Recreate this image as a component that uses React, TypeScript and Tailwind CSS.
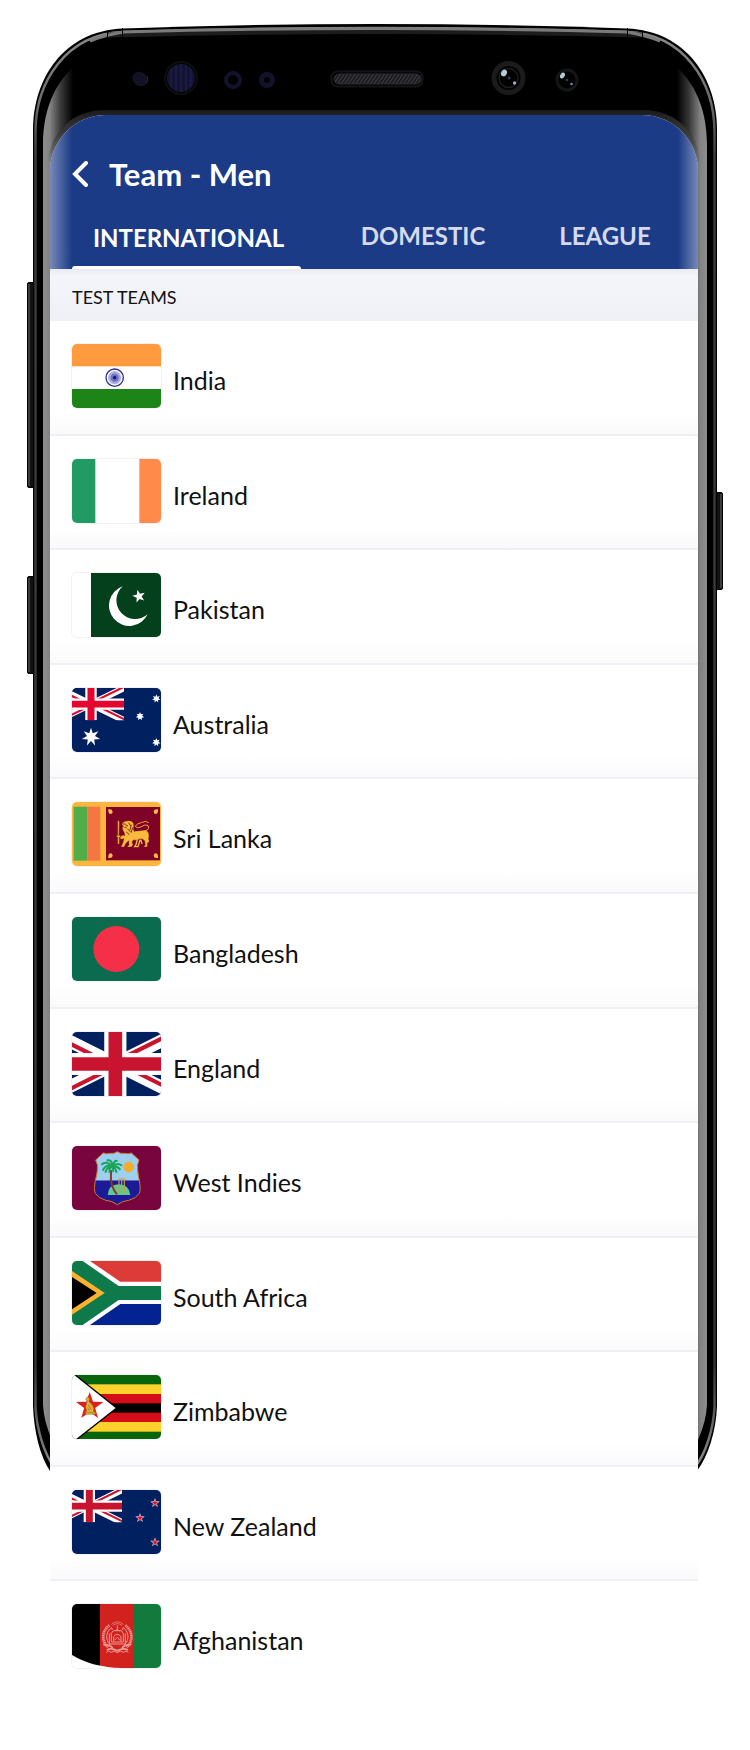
import type { ReactNode } from "react";

const NAVY = "#00205f";

function starPoints(cx: number, cy: number, r: number, n = 5, inner = 0.4) {
  const pts: string[] = [];
  for (let i = 0; i < n * 2; i++) {
    const radius = i % 2 === 0 ? r : r * inner;
    const a = (Math.PI * i) / n - Math.PI / 2;
    pts.push(`${(cx + radius * Math.cos(a)).toFixed(1)},${(cy + radius * Math.sin(a)).toFixed(1)}`);
  }
  return pts.join(" ");
}

function UnionJack({ x, width, height, red }: { x: number; width: number; height: number; red: string }) {
  return (
    <svg x={x} y={0} width={width} height={height} viewBox="0 0 60 30" preserveAspectRatio="none">
      <rect width="60" height="30" fill={NAVY} />
      <path d="M0 0L60 30M60 0L0 30" stroke="#fff" strokeWidth="6" />
      <path d="M0 0L30 15H25.6L0 2.2zM60 0L30 15H25.6L55.6 0zM60 30L30 15H34.4L60 27.8zM0 30L30 15H34.4L4.4 30z" fill={red} />
      <path d="M30 0V30M0 15H60" stroke="#fff" strokeWidth="10.4" />
      <path d="M30 0V30M0 15H60" stroke={red} strokeWidth="6.4" />
    </svg>
  );
}

function India() {
  return (
    <>
      <rect width="267" height="192" fill="#fff" />
      <rect width="267" height="67" fill="#ff9a3f" />
      <rect y="135" width="267" height="57" fill="#1d8517" />
      <circle cx="128" cy="101" r="26" fill="none" stroke="#2b2d96" strokeWidth="4" />
      <circle cx="128" cy="101" r="19" fill="#c3c4e6" />
      <circle cx="128" cy="101" r="12" fill="#8688cb" />
      {Array.from({ length: 12 }, (_, i) => (
        <path key={i} d="M128 80V122" stroke="#4244a6" strokeWidth="0.8" transform={`rotate(${i * 15} 128 101)`} />
      ))}
      <circle cx="128" cy="101" r="5" fill="#12148a" />
    </>
  );
}

function Ireland() {
  return (
    <>
      <rect width="267" height="192" fill="#fff" />
      <rect width="70" height="192" fill="#219b63" />
      <rect x="202" width="65" height="192" fill="#ff8a4a" />
    </>
  );
}

function Pakistan() {
  return (
    <>
      <rect width="267" height="192" fill="#fff" />
      <rect x="57" width="210" height="192" fill="#04401c" />
      <path d="M152 40A61 61 0 1 0 227 124A55 55 0 1 1 152 40z" fill="#fff" />
      <polygon points={starPoints(201, 70, 20)} fill="#fff" transform="rotate(-14 201 70)" />
    </>
  );
}

function Australia() {
  return (
    <>
      <rect width="267" height="192" fill={NAVY} />
      <UnionJack x={-42} width={198} height={97} red="#e4062f" />
      <polygon points={starPoints(57, 147, 28, 7, 0.44)} fill="#fff" />
      <polygon points={starPoints(204, 85, 13, 7, 0.5)} fill="#fff" />
      <polygon points={starPoints(253, 32, 13, 7, 0.5)} fill="#fff" />
      <polygon points={starPoints(253, 163, 13, 7, 0.5)} fill="#fff" />
    </>
  );
}

function SriLanka() {
  return (
    <>
      <rect width="267" height="192" fill="#fcb63f" />
      <rect x="5" y="14" width="41" height="162" fill="#50ad48" />
      <rect x="46" y="14" width="39" height="162" fill="#f47743" />
      <rect x="102" y="15" width="162" height="160" fill="#7e0326" />
      <g fill="#fcc04a">
        <path d="M109 22Q121 20 122 29Q122 36 115 36Q108 34 109 22z" />
        <path d="M258 22Q246 20 245 29Q245 36 252 36Q259 34 258 22z" />
        <path d="M109 168Q121 170 122 161Q122 154 115 154Q108 156 109 168z" />
        <path d="M258 168Q246 170 245 161Q245 154 252 154Q259 156 258 168z" />
      </g>
      <g fill="#fbb93e" stroke="#5b1a12" strokeWidth="1">
        <path d="M137 56Q142 54 142 62L141 100H137z" />
        <path d="M134 100H145V105H142V126H137V105H134z" />
        <path d="M144 106L152 99L158 101L157 92Q151 86 151 76L155 73L150 69Q150 60 160 58Q172 53 182 60Q188 68 184 80L186 88Q204 86 220 84Q231 88 231 102Q228 112 232 118L226 124V135H215L220 129L218 116Q212 110 206 110Q194 116 184 114L180 120L183 128L178 135H165L171 129L170 116L162 124L156 135H147L152 124L156 110L146 112z" />
      </g>
      <path d="M220 86Q234 82 228 70Q218 66 206 75Q194 80 190 72Q196 64 208 62Q222 54 230 62" fill="none" stroke="#efa93a" strokeWidth="3" />
      <path d="M160 68L168 72M170 62L176 72M178 68L174 84M166 80L178 92M157 76H164M163 90L172 98M182 76L178 90M153 66H160" fill="none" stroke="#6b1a16" strokeWidth="2.6" />
      <path d="M196 112L192 128L188 134H198L204 114M206 112L210 126" fill="none" stroke="#fbb93e" strokeWidth="4" />
    </>
  );
}

function Bangladesh() {
  return (
    <>
      <rect width="267" height="192" fill="#0b6b4f" />
      <circle cx="133" cy="96" r="69" fill="#f62f48" />
    </>
  );
}

function England() {
  return <UnionJack x={-62} width={384} height={192} red="#c8142f" />;
}

function WestIndies() {
  const shield =
    "M136 17Q145 24 157 22Q169 25 178 21L201 42Q194 58 197 72Q198 86 202 104Q207 132 202 142Q192 158 170 163Q152 164 136 176Q120 164 102 163Q80 158 70 142Q65 132 70 104Q75 86 76 72Q79 58 71 42L94 21Q103 25 115 22Q127 24 136 17z";
  return (
    <>
      <rect width="267" height="192" fill="#78053e" />
      <clipPath id="wi-shield">
        <path d={shield} />
      </clipPath>
      <g clipPath="url(#wi-shield)">
        <rect width="267" height="104" fill="#9dd0ee" />
        <rect y="104" width="267" height="88" fill="#1b1b98" />
      </g>
      <path d={shield} fill="none" stroke="#c97b2a" strokeWidth="3" />
      <circle cx="170" cy="63" r="16" fill="#f3ad2c" />
      <path d="M107 147Q109 115 140 115Q172 116 175 147z" fill="#5fca94" />
      <path d="M141 142V99H157V142M149 99V142" fill="none" stroke="#c6a23a" strokeWidth="3.5" />
      <path d="M118 72Q114 100 121 120Q126 136 135 145" fill="none" stroke="#8a3620" strokeWidth="6" />
      <g fill="none" stroke="#17a55c" strokeWidth="6">
        <path d="M120 61Q104 42 88 56M120 61Q100 54 92 74M120 63Q104 62 100 80M120 61Q122 40 104 43M120 61Q130 38 136 46M120 61Q136 48 150 59M120 62Q136 58 145 72M120 62Q130 62 134 80M119 62Q112 66 112 80M120 62Q124 66 124 78" />
      </g>
    </>
  );
}

function SouthAfrica() {
  return (
    <>
      <rect width="267" height="96" fill="#dd3b38" />
      <rect y="96" width="267" height="96" fill="#042392" />
      <polygon points="0,0 54,0 145,62 267,62 267,129 145,129 54,192 0,192" fill="#fff" />
      <polygon points="0,0 32,0 140,75 267,75 267,117 140,117 32,192 0,192" fill="#0e7a4c" />
      <polygon points="0,30 98,96 0,161" fill="#fcb22f" />
      <polygon points="0,48 74,96 0,145" fill="#000" />
    </>
  );
}

function Zimbabwe() {
  return (
    <>
      <rect width="267" height="192" fill="#09640c" />
      <rect y="28" width="267" height="142" fill="#ffd22d" />
      <rect y="57" width="267" height="84" fill="#d40d18" />
      <rect y="85" width="267" height="28" fill="#000" />
      <path d="M0 -6L2 -6L134 99L8 198L0 198z" fill="#fff" stroke="#000" strokeWidth="4" />
      <rect width="3" height="192" fill="#fff" />
      <polygon points={starPoints(53, 94, 43)} fill="#e21d1d" />
      <path
        d="M41 74L45 66Q51 65 52 71L51 80Q58 85 63 94Q67 100 64 109L70 112V118H41V110L45 108Q38 98 43 88L46 76z"
        fill="#ddb23b"
        stroke="#94701c"
        strokeWidth="1.5"
      />
      <path d="M49 90L58 104M47 98L53 108M44 113H68" stroke="#94701c" strokeWidth="2" />
    </>
  );
}

function NewZealand() {
  return (
    <>
      <rect width="267" height="192" fill={NAVY} />
      <UnionJack x={-46} width={196} height={97} red="#c8142f" />
      {[
        [204, 84],
        [249, 39],
        [249, 157],
      ].map(([x, y]) => (
        <g key={y}>
          <polygon points={starPoints(x, y, 15)} fill="#f3c9d3" />
          <polygon points={starPoints(x, y, 10)} fill="#d4142f" />
        </g>
      ))}
    </>
  );
}

function Afghanistan() {
  return (
    <>
      <rect width="267" height="192" fill="#fff" />
      <clipPath id="af-cut">
        <path d="M0 0H267V192H150Q60 190 0 153z" />
      </clipPath>
      <g clipPath="url(#af-cut)">
        <rect width="84" height="192" fill="#000" />
        <rect x="84" width="103" height="192" fill="#d1221d" />
        <rect x="186" width="81" height="192" fill="#117a3c" />
      </g>
      <g fill="none" stroke="#eb9a95">
        <path d="M112 64A42 42 0 0 0 108 130M160 64A42 42 0 0 1 164 130" strokeWidth="8" strokeDasharray="4 1.6" />
        <path d="M119 70A34 34 0 0 0 114 122M153 70A34 34 0 0 1 158 122" strokeWidth="3" />
        <path d="M118 61Q136 46 154 61M122 64Q136 54 150 64" strokeWidth="2" />
        <path d="M94 122Q112 120 122 132M178 122Q160 120 150 132M104 138Q118 130 136 140Q154 130 168 138" strokeWidth="5" />
        <path d="M103 145L110 141L118 145L126 141L136 146L146 141L154 145L162 141L169 145" strokeWidth="3" />
        <path d="M118 114V88L124 80H148L154 88V114zM125 112V98Q136 84 147 98V112M136 64V78M130 82Q136 72 142 82M128 108L136 100L145 110" strokeWidth="3" />
        <path d="M112 88V120H160V88M120 78V72M152 78V72" strokeWidth="3" />
      </g>
    </>
  );
}

const teams: { name: string; flag: ReactNode }[] = [
  { name: "India", flag: <India /> },
  { name: "Ireland", flag: <Ireland /> },
  { name: "Pakistan", flag: <Pakistan /> },
  { name: "Australia", flag: <Australia /> },
  { name: "Sri Lanka", flag: <SriLanka /> },
  { name: "Bangladesh", flag: <Bangladesh /> },
  { name: "England", flag: <England /> },
  { name: "West Indies", flag: <WestIndies /> },
  { name: "South Africa", flag: <SouthAfrica /> },
  { name: "Zimbabwe", flag: <Zimbabwe /> },
  { name: "New Zealand", flag: <NewZealand /> },
  { name: "Afghanistan", flag: <Afghanistan /> },
];

const BODY =
  "M33 130C33 78 64 31 123 28.5Q250 24 375 24Q500 24 627 28.5C686 31 717 78 717 130V1406C716 1432 708 1456 697 1471H50C40 1456 34 1432 33 1406z";

function PhoneFrame() {
  return (
    <svg
      aria-hidden="true"
      className="absolute inset-x-0 top-0 h-[1480px] w-full"
      viewBox="0 0 750 1480"
      preserveAspectRatio="none"
    >
      <defs>
        <linearGradient id="glassL" gradientUnits="userSpaceOnUse" x1="42" y1="0" x2="73" y2="0">
          <stop offset="0" stopColor="#8e8e8e" />
          <stop offset="0.25" stopColor="#838383" />
          <stop offset="0.6" stopColor="#3a3a3a" />
          <stop offset="1" stopColor="#000" />
        </linearGradient>
        <linearGradient id="glassR" gradientUnits="userSpaceOnUse" x1="708" y1="0" x2="677" y2="0">
          <stop offset="0" stopColor="#8e8e8e" />
          <stop offset="0.25" stopColor="#838383" />
          <stop offset="0.6" stopColor="#3a3a3a" />
          <stop offset="1" stopColor="#000" />
        </linearGradient>
        <linearGradient id="metal" x1="0" y1="0" x2="0" y2="1">
          <stop offset="0" stopColor="#8a8a8a" />
          <stop offset="0.05" stopColor="#6e6e6e" />
          <stop offset="0.09" stopColor="#3a3a3a" />
          <stop offset="0.93" stopColor="#333" />
          <stop offset="1" stopColor="#8a8a8a" />
        </linearGradient>
        <linearGradient id="rim" gradientUnits="userSpaceOnUse" x1="0" y1="110" x2="0" y2="168">
          <stop offset="0" stopColor="#1b1b1b" />
          <stop offset="0.4" stopColor="#3a3a3a" />
          <stop offset="1" stopColor="#777" stopOpacity="0" />
        </linearGradient>
        <pattern id="mesh" width="3" height="3" patternUnits="userSpaceOnUse" patternTransform="rotate(35)">
          <rect width="3" height="3" fill="#1c1c20" />
          <rect width="1" height="3" fill="#3c3c42" />
        </pattern>
        <pattern id="lines" width="5" height="5" patternUnits="userSpaceOnUse">
          <rect width="5" height="5" fill="#131333" />
          <rect width="2" height="5" fill="#1a1a42" />
        </pattern>
      </defs>

      <g fill="#111" stroke="#000" strokeWidth="1">
        <rect x="27.5" y="282.5" width="8" height="205" rx="1.5" />
        <rect x="27.5" y="576.5" width="8" height="97" rx="1.5" />
        <rect x="714.5" y="492.5" width="8" height="97" rx="1.5" />
      </g>
      <path d="M29 284V486M29 578V672M721 494V588" stroke="#6b6b6b" strokeWidth="1" />

      <path d={BODY} fill="#000" />
      <path
        d="M35.5 1408V132C35.5 82 66 34 123 32Q250 28 375 28Q500 28 627 32C684 34 714.5 82 714.5 132V1408C713 1430 706 1453 695 1467M35.5 1408C37 1430 44 1453 54 1467"
        fill="none"
        stroke="url(#metal)"
        strokeWidth="2.5"
      />
      <path d="M108 35Q250 31.500 375 31.500Q500 31.500 642 35" fill="none" stroke="#1c1c1c" strokeWidth="5" />
      <path d="M90 41Q105 35 123 32Q250 28.500 375 28.500Q500 28.500 627 32Q645 35 660 41" fill="none" stroke="#7b7b7b" strokeWidth="3" />
      <path d="M107.500 31V41M122.500 28V39M627.500 28V39M642.500 31V41" stroke="#000" strokeWidth="1" />

      <path d="M84 59C58 76 43 105 43 145V1405Q44 1422 52 1440H80V100z" fill="url(#glassL)" />
      <path d="M666 59C692 76 707 105 707 145V1405Q706 1422 698 1440H670V100z" fill="url(#glassR)" />
      <path
        d="M50 172C50 138 70 113 106 113H642C678 113 698 138 698 172"
        fill="none"
        stroke="url(#rim)"
        strokeWidth="6"
      />

      <ellipse cx="140" cy="79" rx="8" ry="7" fill="#121226" transform="rotate(35 140 79)" />
      <path d="M146 84A8 8 0 0 0 147 76" fill="none" stroke="#26262c" strokeWidth="1" />
      <circle cx="181" cy="78" r="16" fill="#020202" stroke="#0e0e0e" strokeWidth="2" />
      <circle cx="181" cy="78" r="14" fill="url(#lines)" />
      <circle cx="233" cy="80" r="7" fill="#020204" stroke="#12122a" strokeWidth="4" />
      <circle cx="267" cy="80" r="5.5" fill="#020204" stroke="#12122a" strokeWidth="5" />
      <rect x="331.5" y="71.5" width="91" height="15" rx="6" fill="#000" stroke="#141414" strokeWidth="2" />
      <rect x="334" y="74" width="87" height="10" rx="5" fill="url(#mesh)" stroke="#2c2c31" strokeWidth="1" />

      <circle cx="508.5" cy="78" r="14.5" fill="#020202" stroke="#1b1b1b" strokeWidth="5" />
      <circle cx="508.5" cy="78" r="9.5" fill="none" stroke="#1d1d1f" strokeWidth="1.5" />
      <ellipse cx="504" cy="73" rx="2.8" ry="3.5" fill="#b5cbd8" transform="rotate(30 504 73)" />
      <circle cx="514.5" cy="83" r="1.7" fill="#a3a6cc" />
      <circle cx="509" cy="78" r="1.5" fill="#21425a" />
      <circle cx="567" cy="80" r="10" fill="#020202" stroke="#151515" strokeWidth="3" />
      <ellipse cx="562.5" cy="75.5" rx="2.2" ry="3.1" fill="#b5cbd8" transform="rotate(30 562.5 75.5)" />
      <circle cx="571.5" cy="84" r="1.3" fill="#8083ae" />
      <circle cx="567" cy="80" r="1.3" fill="#21425a" />
    </svg>
  );
}

function Tab({ label, active = false }: { label: string; active?: boolean }) {
  return (
    <button
      type="button"
      role="tab"
      aria-selected={active}
      className={
        active
          ? "flex flex-col items-center justify-between pt-0.5 pl-1 text-white"
          : "flex flex-col items-center text-[#d6daea]"
      }
    >
      <span>{label}</span>
      {active && <span className="-ml-1 h-[3px] w-[calc(100%+4px)] rounded-t-[3px] bg-white" />}
    </button>
  );
}

export default function App() {
  return (
    <div className="min-h-screen bg-white font-[Lato,sans-serif] text-[#111]">
      <div className="relative mx-auto w-full max-w-[750px] pt-[115px] pr-[52px] pb-12 pl-[50px]">
        <PhoneFrame />
        <main className="relative overflow-hidden rounded-t-[56px] bg-white">
          <header className="relative bg-[#1c3b87] pt-[39px]">
            <div className="flex items-center gap-[21px] pl-[22px]">
              <button type="button" aria-label="Back" className="text-white">
                <svg width="16" height="26" viewBox="0 0 16 26" fill="none" stroke="currentColor" strokeWidth="4">
                  <path d="M14 2L3 13L14 24" strokeLinecap="round" strokeLinejoin="miter" />
                </svg>
              </button>
              <h1 className="text-[31px] leading-10 font-bold text-white">Team - Men</h1>
            </div>
            <div
              role="tablist"
              className="mt-[22px] grid h-[53px] grid-cols-[229fr_244fr_120fr] pt-1 pr-[33px] pl-[22px] text-2xl leading-8 font-bold"
            >
              <Tab label="INTERNATIONAL" active />
              <Tab label="DOMESTIC" />
              <Tab label="LEAGUE" />
            </div>
            <div className="pointer-events-none absolute inset-y-0 left-0 w-[22px] bg-linear-to-r from-white/40 to-transparent" />
            <div className="pointer-events-none absolute inset-y-0 right-0 w-[20px] bg-linear-to-l from-white/40 to-transparent" />
          </header>

          <h2 className="bg-linear-to-b from-[#ebecf2] via-[#f4f5fb] via-15% to-[#eff0f6] px-[22px] pt-[14px] pb-[10px] text-lg leading-7">
            TEST TEAMS
          </h2>

          <ul className="grid min-h-[1375px] auto-rows-fr">
            {teams.map(({ name, flag }) => (
              <li
                key={name}
                className="border-b-2 border-[#efeff6] bg-linear-to-b from-white from-80% to-[#fafafb] last:border-white last:to-white"
              >
                <a href={`#${name.toLowerCase().replace(" ", "-")}`} className="flex items-center gap-3 px-[22px] pt-[23px]">
                  <span className="block h-16 w-[89px] shrink-0 overflow-hidden rounded-[5px] ring-1 ring-black/5">
                    <svg aria-hidden="true" className="block h-full w-full" viewBox="0 0 267 192" preserveAspectRatio="none">
                      {flag}
                    </svg>
                  </span>
                  <span className="pt-2 text-[25px] leading-8">{name}</span>
                </a>
              </li>
            ))}
          </ul>
        </main>
      </div>
    </div>
  );
}
